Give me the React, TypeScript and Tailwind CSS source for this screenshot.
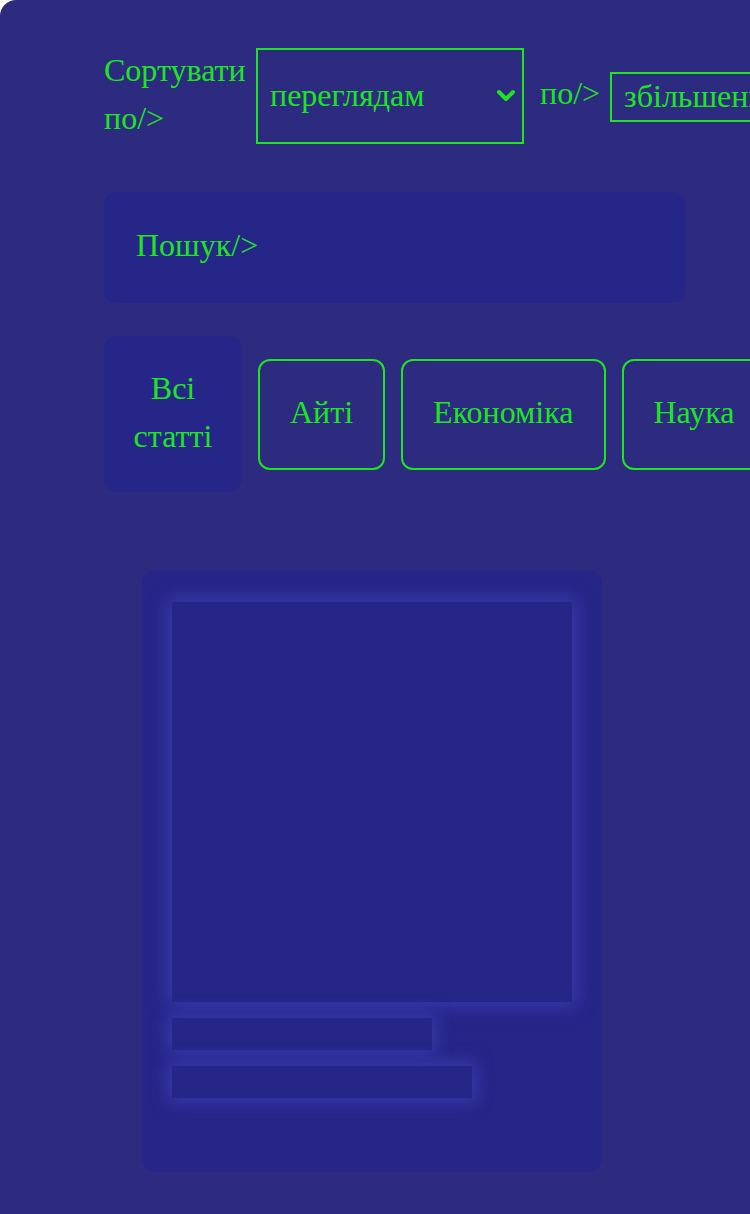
import React from 'react';

const Chevron: React.FC = () => (
  <svg width="20" height="14" viewBox="0 0 20 14" className="shrink-0">
    <path d="M3 4 L10 11 L17 4" fill="none" stroke="#1ee61e" strokeWidth="4" strokeLinecap="round" strokeLinejoin="round" />
  </svg>
);

const categories = ['Айті', 'Економіка', 'Наука', 'Спорт'];

const App: React.FC = () => {
  return (
    <div className="w-[750px] h-[1214px] overflow-hidden bg-white">
      <div className="w-[1100px] h-[1214px] rounded-tl-2xl bg-[#2c2b80] pl-[104px] pt-[48px] font-['Liberation_Serif',serif] text-[32px] leading-[48px] text-[#1ee61e]">
        {/* Sort controls */}
        <div className="flex items-center">
          <div className="w-[144px] -mt-[4px]">Сортувати по/&gt;</div>
          <div className="ml-[8px] flex h-[96px] w-[268px] items-center justify-between border-2 border-[#1ee61e] pb-[3px] pl-[12px] pr-[6px]">
            <span>переглядам</span>
            <Chevron />
          </div>
          <div className="ml-[16px] -mt-[6px]">по/&gt;</div>
          <div className="ml-[10px] mt-[2px] flex h-[50px] items-center border-2 border-[#1ee61e] pb-[3px] px-[12px]">
            <span>збільшенням</span>
            <span className="ml-[60px]"><Chevron /></span>
          </div>
        </div>

        {/* Search */}
        <div className="mt-[48px] flex h-[111px] w-[581px] items-center rounded-xl bg-[#262689] px-[32px] pb-[5px]">
          Пошук/&gt;
        </div>

        {/* Categories */}
        <div className="mt-[33px] flex items-center gap-4">
          <div className="flex h-[156px] w-[138px] shrink-0 items-center justify-center rounded-xl bg-[#262689] pb-[5px] text-center">
            Всі
            <br />
            статті
          </div>
          {categories.map(c => (
            <div
              key={c}
              className="flex h-[111px] shrink-0 items-center rounded-xl border-2 border-[#1ee61e] px-[30px] pb-[4px]"
            >
              {c}
            </div>
          ))}
        </div>

        {/* Skeleton card */}
        <div className="ml-[38px] mt-[79px] h-[601px] w-[460px] rounded-xl bg-[#262689] px-[30px] pt-[31px]">
          <div className="h-[400px] w-[400px] bg-[#262689] shadow-[0_0_16px_4px_#3a3aaa]" />
          <div className="mt-[16px] h-[32px] w-[260px] bg-[#262689] shadow-[0_0_16px_4px_#3a3aaa]" />
          <div className="mt-[16px] h-[32px] w-[300px] bg-[#262689] shadow-[0_0_16px_4px_#3a3aaa]" />
        </div>
      </div>
    </div>
  );
};

export default App;
